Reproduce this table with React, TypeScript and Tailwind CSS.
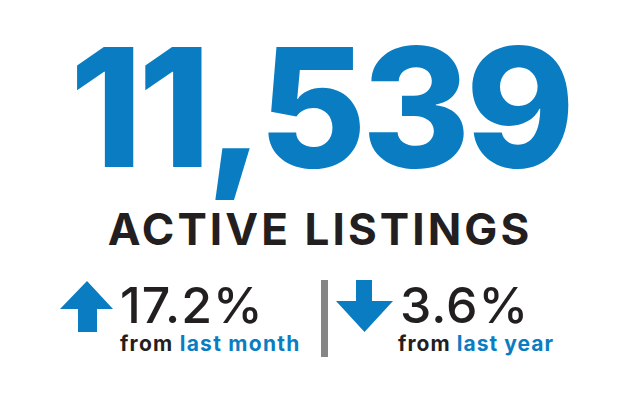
import React from "react";

const BLUE = "#0a7dc2";

function UpArrow() {
  return (
    <svg width="53" height="51" viewBox="0 0 53 51" className="shrink-0 mt-[1px]">
      <polygon points="0,28 27,0 53,28 37,28 37,51 18,51 18,28" fill={BLUE} />
    </svg>
  );
}

function DownArrow() {
  return (
    <svg width="57" height="52" viewBox="0 0 57 52" className="shrink-0">
      <polygon points="20,0 36,0 36,21 57,21 28.5,52 0,21 20,21" fill={BLUE} />
    </svg>
  );
}

export default function App() {
  return (
    <div
      className="w-[640px] h-[400px] bg-white flex flex-col items-center overflow-hidden"
      style={{ fontFamily: "Inter, 'Liberation Sans', sans-serif" }}
    >
      <div className="mt-[25px] h-[165px] text-[165px] leading-none font-extrabold text-[#0a7dc2] tracking-[-0.028em] whitespace-nowrap">
        11,539
      </div>
      <div className="mt-[17px] h-[44px] text-[44px] leading-none font-bold text-[#231f20] tracking-[0.07em] whitespace-nowrap">
        ACTIVE LISTINGS
      </div>
      <div className="mt-[29px] w-full flex items-start pl-[60px]">
        <div className="w-[261px] flex items-start gap-[7px]">
          <UpArrow />
          <div className="flex flex-col">
            <div className="h-[50px] text-[50px] leading-none font-medium text-[#231f20] tracking-[0.02em] whitespace-nowrap">
              17.2%
            </div>
            <div className="mt-[3px] text-[21px] leading-none font-bold text-[#231f20] tracking-[0.06em] whitespace-nowrap">
              from <span className="text-[#0a7dc2]">last month</span>
            </div>
          </div>
        </div>
        <div className="w-[7px] h-[77px] bg-[#858585] shrink-0" />
        <div className="ml-[8px] flex items-start gap-[7px]">
          <DownArrow />
          <div className="flex flex-col">
            <div className="h-[50px] text-[50px] leading-none font-medium text-[#231f20] tracking-[0.02em] whitespace-nowrap">
              3.6%
            </div>
            <div className="mt-[3px] -ml-[2px] text-[21px] leading-none font-bold text-[#231f20] tracking-[0.05em] whitespace-nowrap">
              from <span className="text-[#0a7dc2]">last year</span>
            </div>
          </div>
        </div>
      </div>
    </div>
  );
}
